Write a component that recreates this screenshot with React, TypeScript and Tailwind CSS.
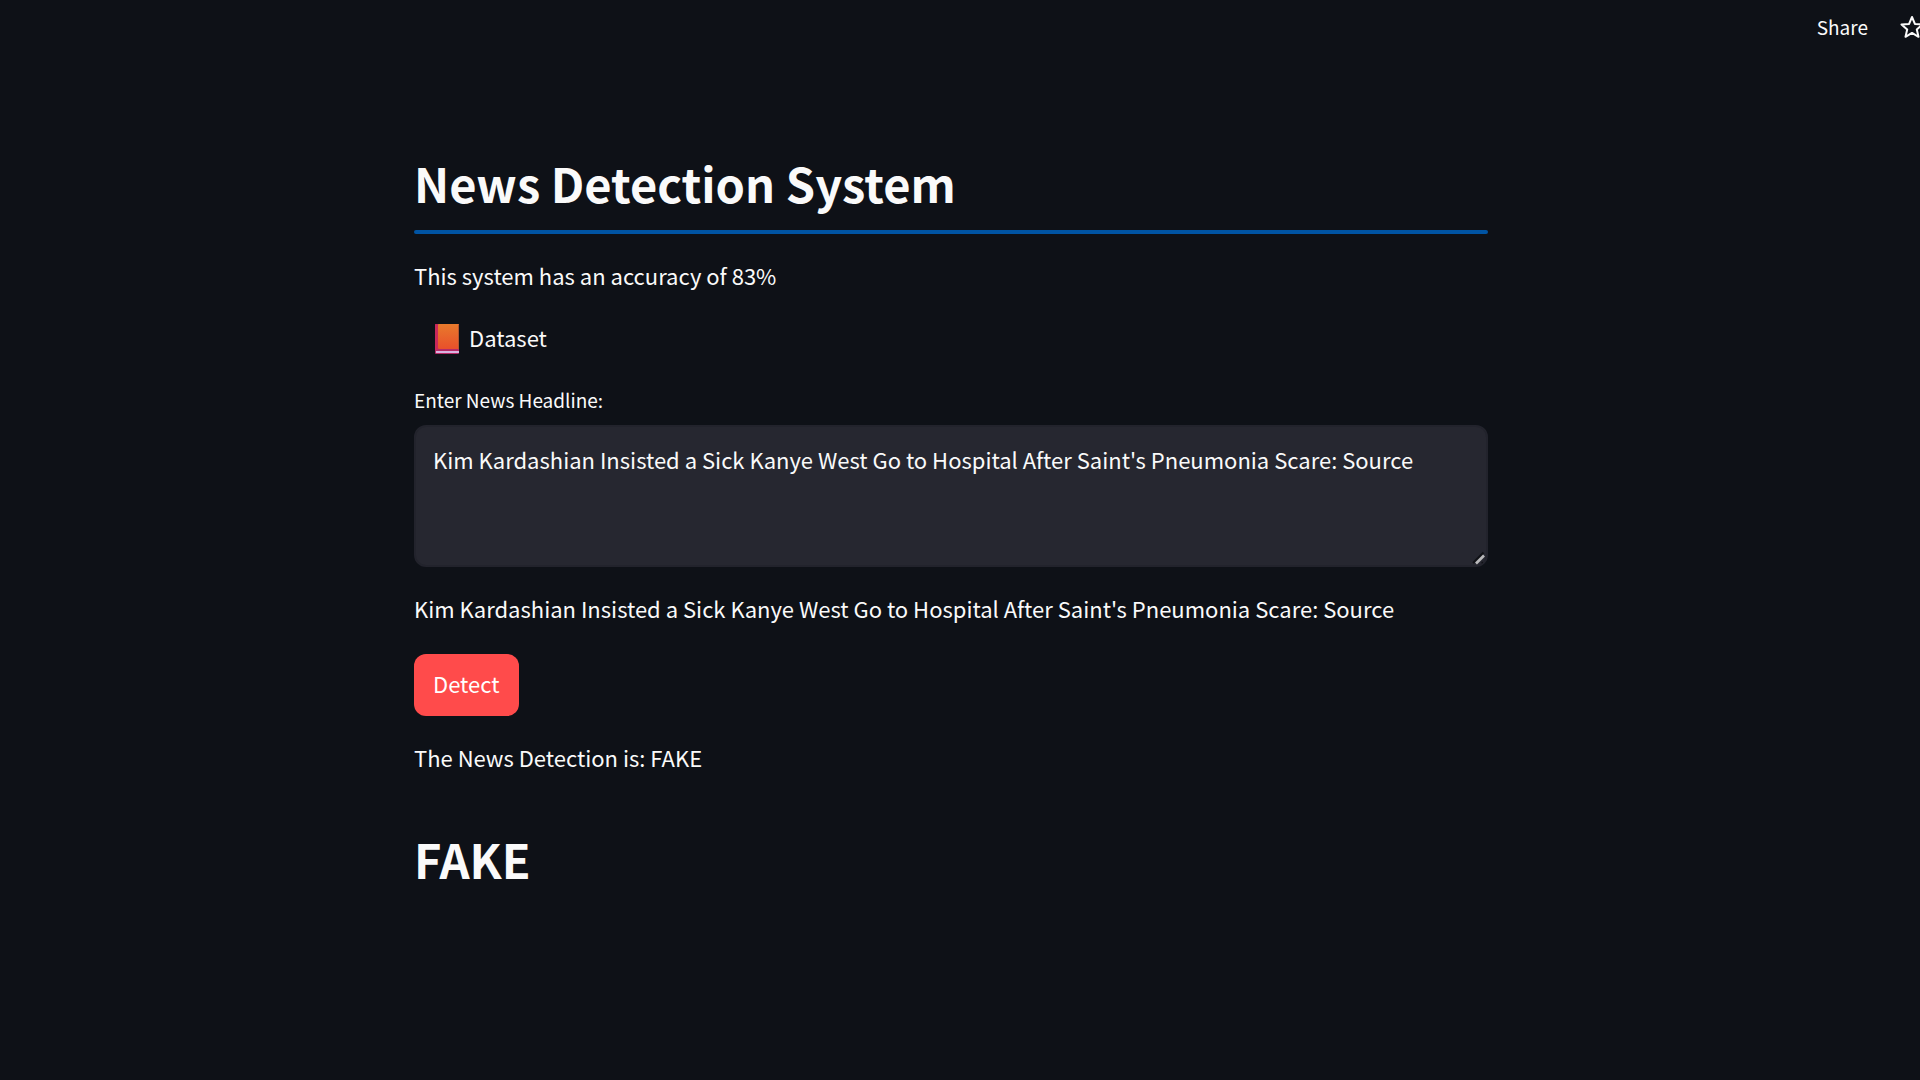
import { useState } from "react";

const HEADLINE =
  "Kim Kardashian Insisted a Sick Kanye West Go to Hospital After Saint's Pneumonia Scare: Source";

function StarIcon() {
  return (
    <svg viewBox="0 0 24 24" className="size-6 shrink-0" fill="none" stroke="currentColor" strokeWidth="2" strokeLinejoin="round" aria-hidden="true">
      <path d="M12 2 14.900 8.900l7.600.6-5.700 5 1.700 7.300L12 17.900l-6.500 3.900 1.700-7.300-5.700-5 7.600-.6z" />
    </svg>
  );
}

function BookIcon() {
  return (
    <svg viewBox="0 0 24 30" className="mt-1 h-[30px] w-6 shrink-0" aria-hidden="true">
      <defs>
        <linearGradient id="cover" x1="0" y1="0" x2="0" y2="1">
          <stop offset="0" stopColor="#e87a2c" />
          <stop offset="1" stopColor="#e9502b" />
        </linearGradient>
      </defs>
      <rect width="24" height="30" rx="1" fill="#b52a66" />
      <rect width="3" height="26" rx="1" fill="#c9285a" />
      <rect x="3" width="21" height="25" rx="1" fill="url(#cover)" />
      <rect x="23" y="1" width="1" height="24" fill="#b5552f" />
      <rect x="1" y="27" width="23" height="2" fill="#d9b3e0" />
    </svg>
  );
}

function ResizeGrip() {
  return (
    <svg viewBox="0 0 14 14" className="pointer-events-none absolute right-0.5 bottom-0.5 size-3.5" aria-hidden="true">
      <path d="M1 12 11.500 1.500" stroke="#101116" strokeWidth="2" />
      <path d="M4 12.500 12 4.500" stroke="#b9b9bb" strokeWidth="2.600" />
      <path d="M9.500 11.500h1.500" stroke="#101116" strokeWidth="1.500" />
    </svg>
  );
}

export default function App() {
  const [headline, setHeadline] = useState(HEADLINE);

  return (
    <div className="min-h-screen overflow-hidden bg-[#0e1117] font-['Noto_Sans_CJK_SC',sans-serif] text-[22px] leading-10 text-[#fafafa]">
      <header className="-mr-1 flex h-[54px] items-center justify-end gap-8">
        <button type="button" className="text-[19px] leading-8">Share</button>
        <button type="button" aria-label="Favorite">
          <StarIcon />
        </button>
      </header>

      <div className="pr-[18px]">
        <main className="mx-auto flex max-w-[1074px] flex-col pt-[94px]">
          <h1 className="text-[47px] leading-[70px] font-semibold">News Detection System</h1>
          <div className="mt-3 h-1 rounded-xs bg-[#0054a3]" />
          <p className="mt-[21px]">This system has an accuracy of 83%</p>
          <a href="#dataset" className="mt-[22px] flex items-center gap-2.5 self-start pl-[21px]">
            <BookIcon />
            Dataset
          </a>
          <label htmlFor="headline" className="mt-[27px] text-[19px] leading-8">
            Enter News Headline:
          </label>
          <div className="relative mt-[9px] flex">
            <textarea
              id="headline"
              value={headline}
              onChange={(e) => setHeadline(e.target.value)}
              className="h-[142px] w-full resize-none rounded-xl border-2 border-[#22232c] bg-[#262730] px-[17px] py-3 outline-none"
            />
            <ResizeGrip />
          </div>
          <p className="mt-[21px]">{headline}</p>
          <button type="button" className="mt-[26px] h-[62px] self-start rounded-xl bg-[#ff4b4b] px-[19px] pb-1 text-white">
            Detect
          </button>
          <p className="mt-[21px]">The News Detection is: FAKE</p>
          <h2 className="mt-[47px] text-[47px] leading-[70px] font-semibold">FAKE</h2>
        </main>
      </div>
    </div>
  );
}
